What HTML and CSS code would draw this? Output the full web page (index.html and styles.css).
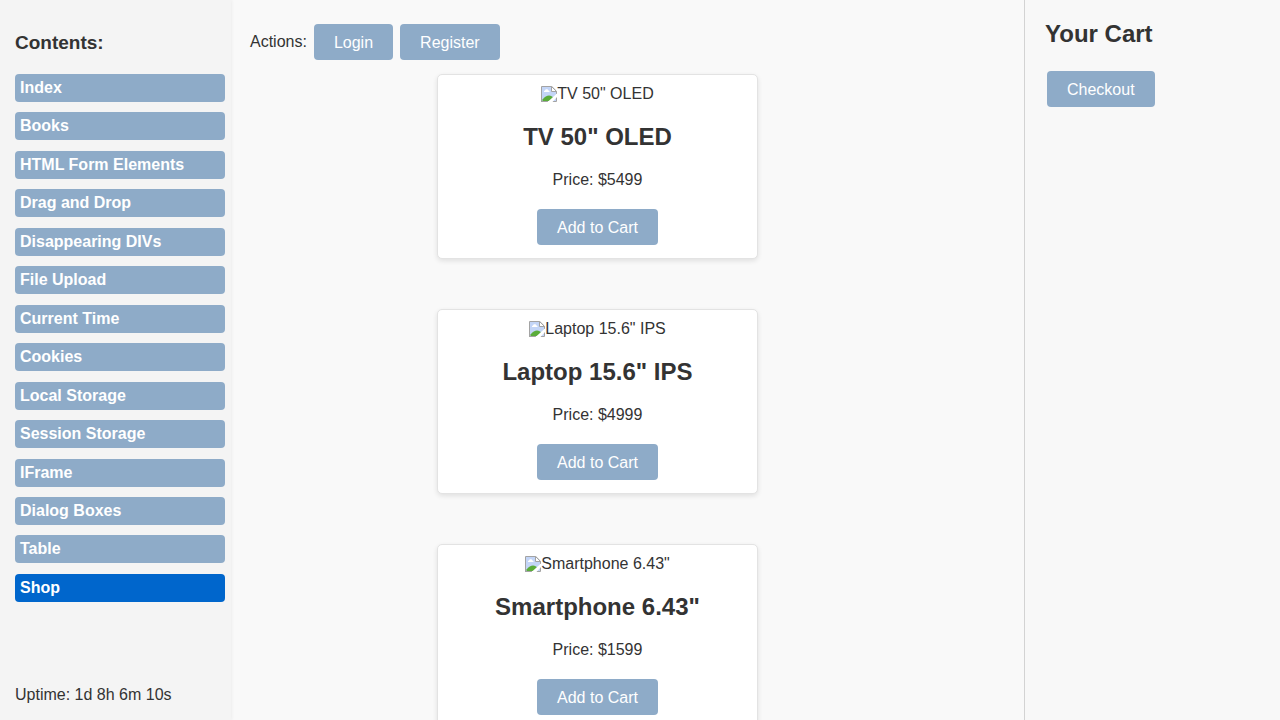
FILE: index.html
```html
<!DOCTYPE html>
<html lang="en">
<head>
<meta charset="utf-8">
<title>Shop</title>
<link rel="stylesheet" href="styles.css">
</head>
<body>
<svg class="sprite" aria-hidden="true">
  <symbol id="no-image" viewBox="0 0 16 16">
    <path d="M0 0h11l5 5v11H0z" fill="#fff"/>
    <path d="M1 1h10v5h4v9H1z" fill="#c3d5f7"/>
    <path d="M3 6V5l1-.5.8-1.300h1.700L7.500 4.500 8.500 5v1z" fill="#fff"/>
    <path d="M1.500 15v-1.500C3.500 11 6 9.500 8 9.500s3.500 1 4 2V15z" fill="#5aac3a"/>
    <path d="M.5 16V.5h10.300l4.700 4.700V8" fill="none" stroke="#a3a3a3"/>
    <path d="M0 15.500h7M11 15.500h4.500V11" fill="none" stroke="#a3a3a3"/>
    <path d="M10.500.5v5h5z" fill="#fff" stroke="#a3a3a3"/>
    <path d="M6.500 16 16 7.500V11l-4.500 5z" fill="#fff"/>
  </symbol>
</svg>
<div class="layout">
  <aside class="sidebar">
    <h3 class="sidebar-title">Contents:</h3>
    <nav class="menu" aria-label="Contents">
      <a class="menu-link" href="#">Index</a>
      <a class="menu-link" href="#">Books</a>
      <a class="menu-link" href="#">HTML Form Elements</a>
      <a class="menu-link" href="#">Drag and Drop</a>
      <a class="menu-link" href="#">Disappearing DIVs</a>
      <a class="menu-link" href="#">File Upload</a>
      <a class="menu-link" href="#">Current Time</a>
      <a class="menu-link" href="#">Cookies</a>
      <a class="menu-link" href="#">Local Storage</a>
      <a class="menu-link" href="#">Session Storage</a>
      <a class="menu-link" href="#">IFrame</a>
      <a class="menu-link" href="#">Dialog Boxes</a>
      <a class="menu-link" href="#">Table</a>
      <a class="menu-link active" href="#" aria-current="page">Shop</a>
    </nav>
    <div class="uptime">Uptime: 1d 8h 6m 10s</div>
  </aside>
  <main class="main">
    <div class="actions">
      <span class="actions-label">Actions:</span>
      <button class="button" type="button">Login</button>
      <button class="button" type="button">Register</button>
    </div>
    <div class="products">
      <article class="card">
        <div class="picture"><svg class="picture-icon" aria-hidden="true"><use href="#no-image"/></svg>TV 50" OLED</div>
        <h2 class="card-title">TV 50" OLED</h2>
        <p class="price">Price: $5499</p>
        <button class="button" type="button">Add to Cart</button>
      </article>
      <article class="card">
        <div class="picture"><svg class="picture-icon" aria-hidden="true"><use href="#no-image"/></svg>Laptop 15.6" IPS</div>
        <h2 class="card-title">Laptop 15.6" IPS</h2>
        <p class="price">Price: $4999</p>
        <button class="button" type="button">Add to Cart</button>
      </article>
      <article class="card">
        <div class="picture"><svg class="picture-icon" aria-hidden="true"><use href="#no-image"/></svg>Smartphone 6.43"</div>
        <h2 class="card-title">Smartphone 6.43"</h2>
        <p class="price">Price: $1599</p>
        <button class="button" type="button">Add to Cart</button>
      </article>
    </div>
  </main>
  <aside class="cart">
    <h2 class="cart-title">Your Cart</h2>
    <button class="button" type="button">Checkout</button>
  </aside>
</div>
</body>
</html>
```

FILE: styles.css
```css
* {
  box-sizing: border-box;
}

body {
  margin: 0;
  background: #f9f9f9;
  color: #333;
  font: 16px/18px "Liberation Sans", Arial, sans-serif;
}

.sprite {
  display: none;
}

.layout {
  display: grid;
  grid-template-columns: 231px 1fr 20%;
  height: 100vh;
  overflow: hidden;
}

.sidebar {
  display: flex;
  flex-direction: column;
  padding: 33px 6px 16px 15px;
  background: #f4f4f4;
  box-shadow: 1px 0 3px rgba(0, 0, 0, 0.05);
}

.sidebar-title {
  margin: 0 0 21px;
  font-size: 19px;
  line-height: 20px;
}

.menu {
  display: flex;
  flex-direction: column;
  justify-content: space-between;
  min-height: 528px;
}

.menu-link {
  padding: 5px;
  border-radius: 4px;
  background: #8eabc8;
  color: #fff;
  font-weight: bold;
  text-decoration: none;
}

.menu-link.active {
  background: #0066cc;
}

.uptime {
  margin-top: auto;
}

.main {
  min-width: 0;
  padding: 24px 79px 0 19px;
  overflow: hidden;
}

.actions {
  display: flex;
  align-items: center;
  gap: 7px;
  margin-bottom: 14px;
}

.button {
  padding: 10px 20px 8px;
  border: 0;
  border-radius: 4px;
  background: #8eabc8;
  color: #fff;
  font: inherit;
  cursor: pointer;
}

.products {
  display: flex;
  flex-direction: column;
  align-items: center;
  gap: 50px;
}

.card {
  display: flex;
  flex-direction: column;
  align-items: center;
  width: 100%;
  max-width: 321px;
  padding: 10px 10px 13px;
  border: 1px solid #e3e3e3;
  border-radius: 5px;
  background: #fff;
  box-shadow: 0 2px 5px rgba(0, 0, 0, 0.1);
}

.picture {
  display: flex;
  align-items: center;
}

.picture-icon {
  width: 16px;
  height: 16px;
}

.card-title {
  margin: 20px 0 21px;
  font-size: 24px;
  line-height: 27px;
}

.price {
  margin: 0 0 20px;
}

.cart {
  padding: 20px;
  border-left: 1px solid #d3d3d3;
  background: #f8f8f8;
}

.cart-title {
  margin: 0 0 24px;
  font-size: 24px;
  line-height: 27px;
}

.cart .button {
  margin: 0 2px;
}
```
